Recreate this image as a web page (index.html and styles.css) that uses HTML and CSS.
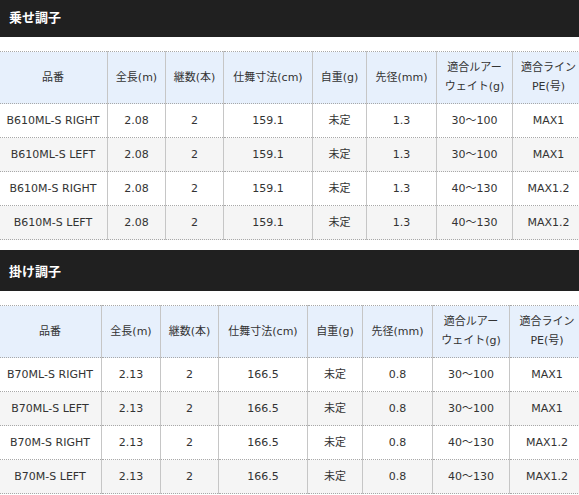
FILE: index.html
```html
<!DOCTYPE html>
<html lang="ja">
<head>
<meta charset="utf-8">
<title>スペック</title>
<link rel="stylesheet" href="styles.css">
</head>
<body>
<div class="page">
  <section class="spec spec-first">
    <h2 class="bar">乗せ調子</h2>
    <table class="spec-table t1">
      <colgroup>
        <col class="c1"><col class="c2"><col class="c3"><col class="c4"><col class="c5"><col class="c6"><col class="c7"><col class="c8">
      </colgroup>
      <thead>
        <tr><th>品番</th><th>全長(m)</th><th>継数(本)</th><th>仕舞寸法(cm)</th><th>自重(g)</th><th>先径(mm)</th><th>適合ルアー<br>ウェイト(g)</th><th>適合ライン<br>PE(号)</th></tr>
      </thead>
      <tbody>
        <tr><td>B610ML-S RIGHT</td><td>2.08</td><td>2</td><td>159.1</td><td>未定</td><td>1.3</td><td>30～100</td><td>MAX1</td></tr>
        <tr><td>B610ML-S LEFT</td><td>2.08</td><td>2</td><td>159.1</td><td>未定</td><td>1.3</td><td>30～100</td><td>MAX1</td></tr>
        <tr><td>B610M-S RIGHT</td><td>2.08</td><td>2</td><td>159.1</td><td>未定</td><td>1.3</td><td>40～130</td><td>MAX1.2</td></tr>
        <tr><td>B610M-S LEFT</td><td>2.08</td><td>2</td><td>159.1</td><td>未定</td><td>1.3</td><td>40～130</td><td>MAX1.2</td></tr>
      </tbody>
    </table>
  </section>
  <section class="spec">
    <h2 class="bar">掛け調子</h2>
    <table class="spec-table t2">
      <colgroup>
        <col class="c1"><col class="c2"><col class="c3"><col class="c4"><col class="c5"><col class="c6"><col class="c7"><col class="c8">
      </colgroup>
      <thead>
        <tr><th>品番</th><th>全長(m)</th><th>継数(本)</th><th>仕舞寸法(cm)</th><th>自重(g)</th><th>先径(mm)</th><th>適合ルアー<br>ウェイト(g)</th><th>適合ライン<br>PE(号)</th></tr>
      </thead>
      <tbody>
        <tr><td>B70ML-S RIGHT</td><td>2.13</td><td>2</td><td>166.5</td><td>未定</td><td>0.8</td><td>30～100</td><td>MAX1</td></tr>
        <tr><td>B70ML-S LEFT</td><td>2.13</td><td>2</td><td>166.5</td><td>未定</td><td>0.8</td><td>30～100</td><td>MAX1</td></tr>
        <tr><td>B70M-S RIGHT</td><td>2.13</td><td>2</td><td>166.5</td><td>未定</td><td>0.8</td><td>40～130</td><td>MAX1.2</td></tr>
        <tr><td>B70M-S LEFT</td><td>2.13</td><td>2</td><td>166.5</td><td>未定</td><td>0.8</td><td>40～130</td><td>MAX1.2</td></tr>
      </tbody>
    </table>
  </section>
</div>
</body>
</html>
```

FILE: styles.css
```css
html, body {
  margin: 0;
  padding: 0;
  background: #fff;
  overflow: hidden;
}

.page {
  width: 579px;
  overflow: hidden;
  font-family: "DejaVu Sans", "Noto Sans CJK JP", sans-serif;
  font-size: 11px;
  color: #333;
}

.spec {
  display: flex;
  flex-direction: column;
  gap: 14px;
  margin-bottom: 10px;
}

.spec-first {
  margin-top: -4px;
}

.bar {
  margin: 0;
  height: 41px;
  display: flex;
  align-items: center;
  padding: 0 9px;
  background: #202020;
  color: #fff;
  font-family: "Noto Sans CJK JP", sans-serif;
  font-size: 13px;
  font-weight: bold;
}

.spec-table {
  width: 586px;
  margin-left: -2px;
  table-layout: fixed;
  border-collapse: collapse;
  text-align: center;
  line-height: 19px;
}

.spec-table th,
.spec-table td {
  border-left: 1px solid #c6c6c6;
  border-right: 1px solid #c6c6c6;
  border-top: 1px dotted #a8a8a8;
  border-bottom: 1px dotted #a8a8a8;
  padding: 7px 2px;
  white-space: nowrap;
  font-weight: normal;
}

.spec-table th {
  background: #e7f0fc;
  padding: 6px 2px 7px;
  color: #333;
}

.spec-table tbody tr:nth-child(odd) td {
  background: #fff;
}

.spec-table tbody tr:nth-child(even) td {
  background: #f5f5f5;
}

.t1 .c1 { width: 109px; }
.t1 .c2 { width: 58px; }
.t1 .c3 { width: 58px; }
.t1 .c4 { width: 89px; }
.t1 .c5 { width: 54px; }
.t1 .c6 { width: 70px; }
.t1 .c7 { width: 76px; }
.t1 .c8 { width: 72px; }

.t2 .c1 { width: 103px; }
.t2 .c2 { width: 59px; }
.t2 .c3 { width: 58px; }
.t2 .c4 { width: 89px; }
.t2 .c5 { width: 55px; }
.t2 .c6 { width: 70px; }
.t2 .c7 { width: 77px; }
.t2 .c8 { width: 75px; }
```
